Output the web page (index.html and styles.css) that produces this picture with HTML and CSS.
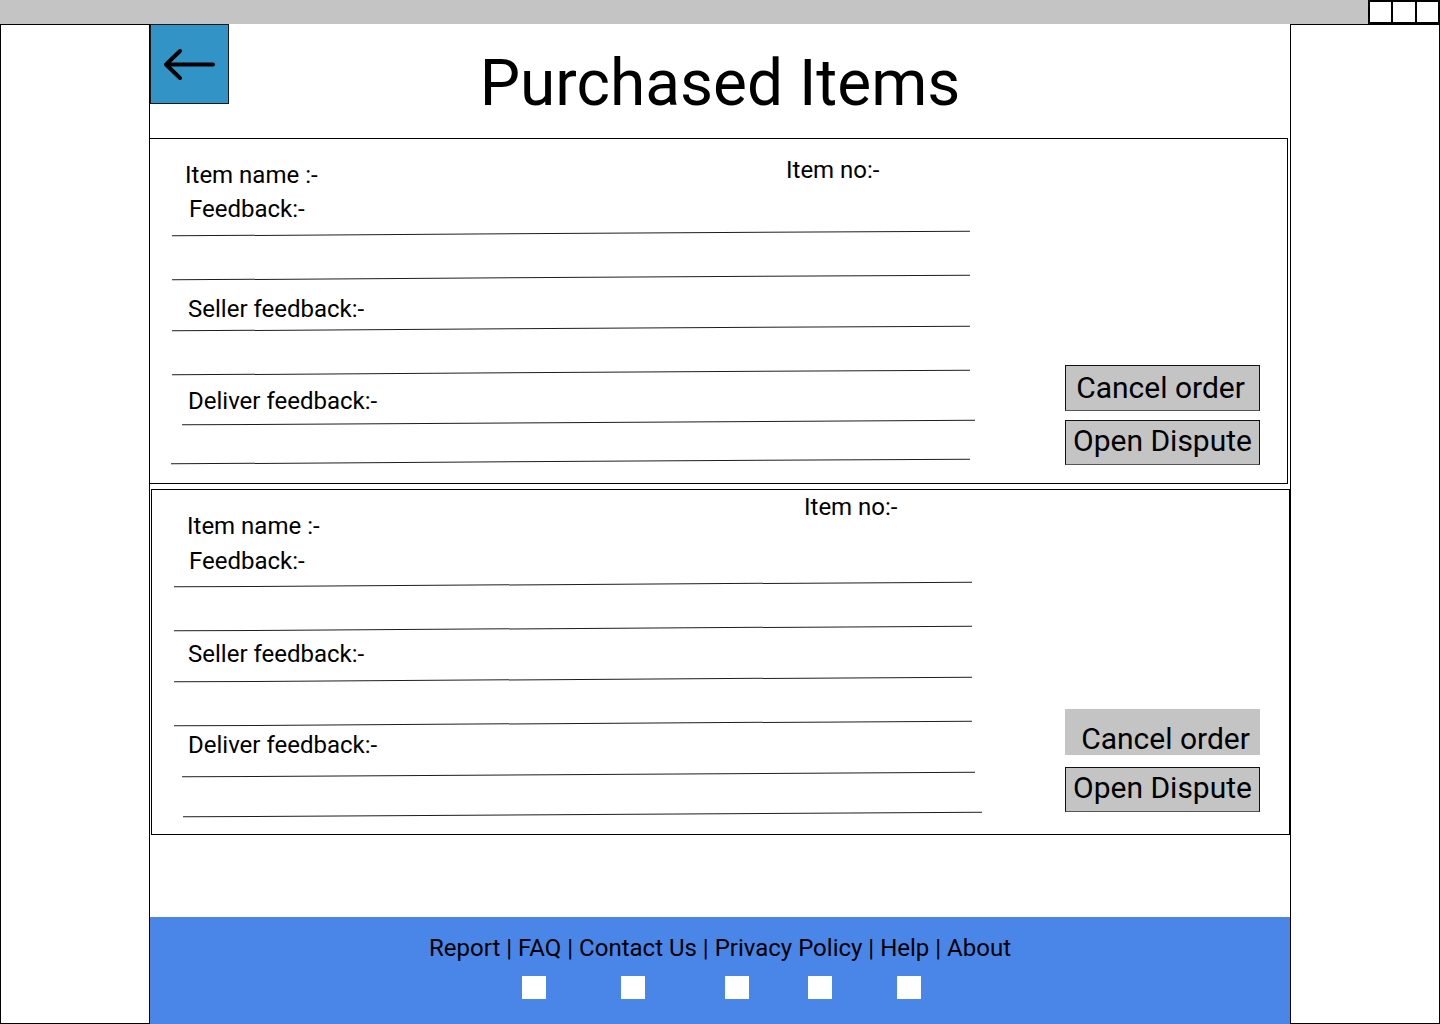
FILE: index.html
```html
<!DOCTYPE html>
<html lang="en">
<head>
<meta charset="utf-8">
<title>Purchased Items</title>
<link rel="stylesheet" href="styles.css">
</head>
<body>
<div class="topbar">
  <div class="winctl"><span></span><span></span><span></span></div>
</div>
<div class="frame">
  <aside class="side side-left"></aside>
  <main class="center">
    <header class="header">
      <button class="back" aria-label="Back">
        <svg viewBox="0 0 77 78" width="77" height="78"><path d="M62 39.5H15M29 26L15 39.5l14 13.5" fill="none" stroke="#000" stroke-width="4" stroke-linecap="round" stroke-linejoin="round"/></svg>
      </button>
      <h1 class="title">Purchased Items</h1>
      <div></div>
    </header>

    <section class="card card-1">
      <div class="fields">
        <div class="head">
          <span class="label name">Item name :-</span>
          <span class="label no">Item no:-</span>
        </div>
        <span class="label feedback">Feedback:-</span>
        <div class="rule r1"></div>
        <div class="rule r2"></div>
        <span class="label seller">Seller feedback:-</span>
        <div class="rule r3"></div>
        <div class="rule r4"></div>
        <span class="label deliver">Deliver feedback:-</span>
        <div class="rule r5"></div>
        <div class="rule r6"></div>
      </div>
      <div class="actions">
        <button class="btn btn-cancel">Cancel order</button>
        <button class="btn btn-dispute">Open Dispute</button>
      </div>
    </section>

    <section class="card card-2">
      <div class="fields">
        <div class="head">
          <span class="label name">Item name :-</span>
          <span class="label no">Item no:-</span>
        </div>
        <span class="label feedback">Feedback:-</span>
        <div class="rule r1"></div>
        <div class="rule r2"></div>
        <span class="label seller">Seller feedback:-</span>
        <div class="rule r3"></div>
        <div class="rule r4"></div>
        <span class="label deliver">Deliver feedback:-</span>
        <div class="rule r5"></div>
        <div class="rule r6"></div>
      </div>
      <div class="actions">
        <button class="btn btn-cancel btn-plain">Cancel order</button>
        <button class="btn btn-dispute">Open Dispute</button>
      </div>
    </section>

    <footer class="footer">
      <p class="links">Report | FAQ | Contact Us | Privacy Policy | Help | About</p>
      <div class="socials"><span></span><span></span><span></span><span></span><span></span></div>
    </footer>
  </main>
  <aside class="side side-right"></aside>
</div>
</body>
</html>
```
FILE: styles.css
```css
* { box-sizing: border-box; }
html, body { margin: 0; padding: 0; }
body {
  width: 1440px;
  height: 1024px;
  overflow: hidden;
  background: #fff;
  color: #000;
  font-family: Roboto, "Liberation Sans", sans-serif;
}

.topbar {
  height: 24px;
  background: #c4c4c4;
  display: flex;
  justify-content: flex-end;
}
.winctl {
  width: 72px;
  height: 24px;
  display: flex;
  border: 2px solid #000;
  background: #fff;
}
.winctl span { flex: 1; }
.winctl span + span { border-left: 2px solid #000; }

.frame {
  display: flex;
  height: 1000px;
}
.side {
  border-top: 1px solid #000;
  border-bottom: 1px solid #000;
}
.side-left {
  width: 149px;
  border-left: 1px solid #000;
}
.side-right {
  width: 150px;
  border-left: 1px solid #000;
  border-right: 1px solid #000;
}
.center {
  width: 1141px;
  border-left: 1px solid #000;
  display: flex;
  flex-direction: column;
  align-items: flex-start;
}

.header {
  width: 1140px;
  height: 114px;
  display: grid;
  grid-template-columns: 79px 1fr 79px;
  align-items: start;
}
.back {
  width: 79px;
  height: 80px;
  margin: 0;
  padding: 0;
  background: #3294c6;
  border: 1px solid #1a1a1a;
  display: block;
}
.back svg { display: block; }
.title {
  margin: 22px 0 0;
  font-size: 64px;
  line-height: 75px;
  font-weight: 400;
  text-align: center;
}

.card {
  width: 1139px;
  height: 346px;
  border: 1px solid #000;
  display: flex;
  flex: none;
}
.card-1 { margin-left: -1px; }
.card-2 { margin-left: 1px; margin-top: 5px; }

.fields {
  width: 840px;
  flex: none;
  display: flex;
  flex-direction: column;
  align-items: flex-start;
}
.head {
  display: flex;
  align-items: flex-start;
}
.label {
  display: block;
  font-size: 24px;
  line-height: 28px;
  white-space: nowrap;
}
.rule {
  height: 0;
  border-top: 1px solid #1e1e1e;
  transform: rotate(-0.34deg);
  width: 798px;
}

/* card 1 placement */
.card-1 .name { margin: 22px 0 0 35px; width: 601px; }
.card-1 .no { margin-top: 17px; }
.card-1 .feedback { margin: 6px 0 0 39px; }
.card-1 .r1 { margin: 10px 0 0 22px; }
.card-1 .r2 { margin: 43px 0 0 22px; }
.card-1 .seller { margin: 17px 0 0 38px; }
.card-1 .r3 { margin: 5px 0 0 22px; }
.card-1 .r4 { margin: 43px 0 0 22px; }
.card-1 .deliver { margin: 14px 0 0 38px; }
.card-1 .r5 { margin: 7px 0 0 32px; width: 793px; }
.card-1 .r6 { margin: 38px 0 0 21px; width: 799px; }

/* card 2 placement */
.card-2 .name { margin: 22px 0 0 35px; width: 617px; }
.card-2 .no { margin-top: 3px; }
.card-2 .feedback { margin: 7px 0 0 37px; }
.card-2 .r1 { margin: 9px 0 0 22px; }
.card-2 .r2 { margin: 43px 0 0 22px; }
.card-2 .seller { margin: 11px 0 0 36px; }
.card-2 .r3 { margin: 11px 0 0 22px; }
.card-2 .r4 { margin: 43px 0 0 22px; }
.card-2 .deliver { margin: 7px 0 0 36px; }
.card-2 .r5 { margin: 15px 0 0 30px; width: 793px; }
.card-2 .r6 { margin: 39px 0 0 31px; width: 799px; }

.actions {
  margin-left: auto;
  display: flex;
  flex-direction: column;
}
.card-1 .actions { margin-right: 27px; padding-top: 226px; }
.card-2 .actions { margin-right: 29px; padding-top: 219px; }

.btn {
  width: 195px;
  margin: 0;
  padding: 0;
  background: #c4c4c4;
  border: 1px solid #111;
  border-bottom-color: #555;
  font-family: Roboto, "Liberation Sans", sans-serif;
  font-size: 30px;
  line-height: 34px;
  color: #000;
  display: flex;
  align-items: center;
  justify-content: center;
}
.btn-cancel { height: 46px; }
.card-1 .btn-cancel { padding-right: 4px; }
.btn-dispute { height: 45px; margin-top: 9px; padding-bottom: 4px; }
.card-2 .btn-dispute { margin-top: 12px; }
.btn-plain {
  border: none;
  padding: 14px 0 0 6px;
}

.footer {
  margin-top: auto;
  width: 1140px;
  height: 107px;
  background: #4a86e8;
  padding-top: 17px;
}
.links {
  margin: 0;
  font-size: 24px;
  line-height: 28px;
  text-align: center;
}
.socials {
  display: flex;
  margin: 14px 0 0 372px;
}
.socials span {
  width: 24px;
  height: 23px;
  background: #fff;
}
.socials span:nth-child(2) { margin-left: 75px; }
.socials span:nth-child(3) { margin-left: 80px; }
.socials span:nth-child(4) { margin-left: 59px; }
.socials span:nth-child(5) { margin-left: 65px; }
```
